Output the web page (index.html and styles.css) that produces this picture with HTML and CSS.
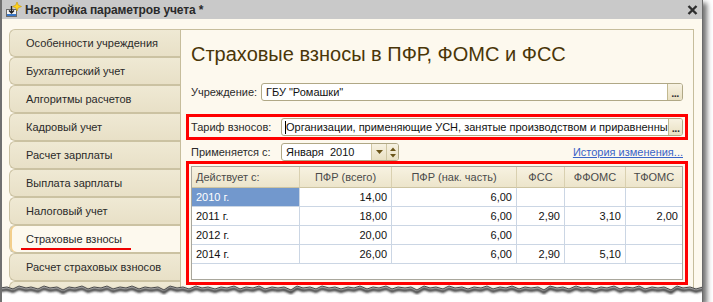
FILE: index.html
```html
<!DOCTYPE html>
<html lang="ru">
<head>
<meta charset="utf-8">
<title>Настройка параметров учета</title>
<link rel="stylesheet" href="styles.css">
</head>
<body>
<div class="window">
  <div class="titlebar">
    <svg class="app-icon" width="18" height="17" viewBox="0 0 18 17">
      <rect x="2.5" y="8.5" width="10" height="7" fill="#f4f4f4" stroke="#6a6a6a"/>
      <rect x="3" y="13" width="9" height="2" fill="#3a78c9"/>
      <path d="M7.5 5 V12 M5 9.5 L7.5 12 L10 9.5" fill="none" stroke="#222" stroke-width="1.4"/>
      <path d="M13 1 L14.3 4.2 L17.5 5.5 L14.3 6.8 L13 10 L11.7 6.8 L8.5 5.5 L11.7 4.2 Z" fill="#ffd21a" stroke="#c99a00" stroke-width="0.6"/>
    </svg>
    <span class="title">Настройка параметров учета *</span>
    <svg class="close" width="11" height="10" viewBox="0 0 11 10">
      <path d="M1.5 1 L9.5 9 M9.5 1 L1.5 9" stroke="#2e2e2e" stroke-width="2.4"/>
    </svg>
  </div>
  <div class="frame">
    <nav class="tabs">
      <div class="tab">Особенности учреждения</div>
      <div class="tab">Бухгалтерский учет</div>
      <div class="tab">Алгоритмы расчетов</div>
      <div class="tab">Кадровый учет</div>
      <div class="tab">Расчет зарплаты</div>
      <div class="tab">Выплата зарплаты</div>
      <div class="tab">Налоговый учет</div>
      <div class="tab active"><span class="mark">Страховые взносы</span></div>
      <div class="tab">Расчет страховых взносов</div>
      <div class="tab"></div>
    </nav>
    <section class="panel">
      <h1 class="heading">Страховые взносы в ПФР, ФОМС и ФСС</h1>
      <div class="row r-org">
        <span class="label l-short">Учреждение:</span>
        <div class="field grow"><span class="val">ГБУ "Ромашки"</span><span class="dots">...</span></div>
      </div>
      <div class="row boxed r-tariff">
        <span class="label l-long">Тариф взносов:</span>
        <div class="field grow"><span class="caret"></span><span class="val">Организации, применяющие УСН, занятые производством и приравненны</span><span class="dots">...</span></div>
      </div>
      <div class="row r-date">
        <span class="label l-long">Применяется с:</span>
        <div class="field date">
          <span class="val">Января&nbsp; 2010</span>
          <span class="btn drop"><svg width="7" height="4" viewBox="0 0 7 4"><path d="M0 0 H7 L3.5 4 Z" fill="#6b561a"/></svg></span>
          <span class="btn spin"><svg width="6" height="11" viewBox="0 0 6 11"><path d="M0 4 L3 0.5 L6 4 Z M0 7 H6 L3 10.5 Z" fill="#6b561a"/></svg></span>
        </div>
        <a class="link" href="#">История изменения...</a>
      </div>
      <div class="boxed tablebox">
        <div class="grid">
          <div class="grow-row head">
            <div class="c left">Действует с:</div>
            <div class="c">ПФР (всего)</div>
            <div class="c">ПФР (нак. часть)</div>
            <div class="c">ФСС</div>
            <div class="c">ФФОМС</div>
            <div class="c last">ТФОМС</div>
          </div>
          <div class="grow-row">
            <div class="c left sel">2010 г.</div>
            <div class="c num">14,00</div>
            <div class="c num">6,00</div>
            <div class="c num"></div>
            <div class="c num"></div>
            <div class="c num last"></div>
          </div>
          <div class="grow-row">
            <div class="c left">2011 г.</div>
            <div class="c num">18,00</div>
            <div class="c num">6,00</div>
            <div class="c num">2,90</div>
            <div class="c num">3,10</div>
            <div class="c num last">2,00</div>
          </div>
          <div class="grow-row">
            <div class="c left">2012 г.</div>
            <div class="c num">20,00</div>
            <div class="c num">6,00</div>
            <div class="c num"></div>
            <div class="c num"></div>
            <div class="c num last"></div>
          </div>
          <div class="grow-row">
            <div class="c left">2014 г.</div>
            <div class="c num">26,00</div>
            <div class="c num">6,00</div>
            <div class="c num">2,90</div>
            <div class="c num">5,10</div>
            <div class="c num last"></div>
          </div>
        </div>
      </div>
    </section>
  </div>
  <svg class="tear" width="713" height="18" viewBox="0 0 713 18">
    <defs>
      <filter id="blur" x="-5%" y="-50%" width="110%" height="200%"><feGaussianBlur stdDeviation="1.3"/></filter>
    </defs>
    <polygon fill="#ffffff" points="0,4 7,3 13,5 19,2 26,4 31,3 38,5 44,2 50,4 57,3 63,6 69,3 75,4 82,2 88,5 94,3 101,4 107,2 113,5 120,3 126,4 132,2 139,5 145,3 151,4 158,3 164,6 170,2 177,4 183,3 189,5 196,2 202,4 208,3 215,5 221,3 227,4 234,2 240,5 246,3 253,4 259,2 265,5 272,3 278,4 284,3 291,6 297,2 303,4 310,3 316,5 322,2 329,4 335,3 341,5 348,3 354,4 360,2 367,5 373,3 379,4 386,2 392,5 398,3 405,4 411,3 417,6 424,2 430,4 436,3 443,5 449,2 455,4 462,3 468,5 474,3 481,4 487,2 493,5 500,3 506,4 512,2 519,5 525,3 531,4 538,3 544,6 550,2 557,4 563,3 569,5 576,2 582,4 588,3 595,5 601,3 607,4 614,2 620,5 626,3 633,4 639,2 645,5 652,3 658,4 664,3 671,6 677,2 683,4 690,3 696,5 703,3 713,4 713,18 0,18"/>
    <polyline filter="url(#blur)" transform="translate(0,2.5)" fill="none" stroke="#3a3a3a" stroke-width="3" points="0,4 7,3 13,5 19,2 26,4 31,3 38,5 44,2 50,4 57,3 63,6 69,3 75,4 82,2 88,5 94,3 101,4 107,2 113,5 120,3 126,4 132,2 139,5 145,3 151,4 158,3 164,6 170,2 177,4 183,3 189,5 196,2 202,4 208,3 215,5 221,3 227,4 234,2 240,5 246,3 253,4 259,2 265,5 272,3 278,4 284,3 291,6 297,2 303,4 310,3 316,5 322,2 329,4 335,3 341,5 348,3 354,4 360,2 367,5 373,3 379,4 386,2 392,5 398,3 405,4 411,3 417,6 424,2 430,4 436,3 443,5 449,2 455,4 462,3 468,5 474,3 481,4 487,2 493,5 500,3 506,4 512,2 519,5 525,3 531,4 538,3 544,6 550,2 557,4 563,3 569,5 576,2 582,4 588,3 595,5 601,3 607,4 614,2 620,5 626,3 633,4 639,2 645,5 652,3 658,4 664,3 671,6 677,2 683,4 690,3 696,5 703,3 713,4"/>
    <polyline fill="none" stroke="#4a4a4a" stroke-width="1" points="0,4 7,3 13,5 19,2 26,4 31,3 38,5 44,2 50,4 57,3 63,6 69,3 75,4 82,2 88,5 94,3 101,4 107,2 113,5 120,3 126,4 132,2 139,5 145,3 151,4 158,3 164,6 170,2 177,4 183,3 189,5 196,2 202,4 208,3 215,5 221,3 227,4 234,2 240,5 246,3 253,4 259,2 265,5 272,3 278,4 284,3 291,6 297,2 303,4 310,3 316,5 322,2 329,4 335,3 341,5 348,3 354,4 360,2 367,5 373,3 379,4 386,2 392,5 398,3 405,4 411,3 417,6 424,2 430,4 436,3 443,5 449,2 455,4 462,3 468,5 474,3 481,4 487,2 493,5 500,3 506,4 512,2 519,5 525,3 531,4 538,3 544,6 550,2 557,4 563,3 569,5 576,2 582,4 588,3 595,5 601,3 607,4 614,2 620,5 626,3 633,4 639,2 645,5 652,3 658,4 664,3 671,6 677,2 683,4 690,3 696,5 703,3 713,4"/>
  </svg>
</div>
</body>
</html>
```

FILE: styles.css
```css
* { box-sizing: border-box; }

html, body {
  margin: 0;
  padding: 0;
}

body {
  width: 713px;
  height: 302px;
  overflow: hidden;
  background: #ffffff;
  font-family: "Liberation Sans", Arial, sans-serif;
  font-size: 11px;
  color: #1e1e1e;
}

.window {
  position: relative;
  width: 703px;
  height: 302px;
  overflow: hidden;
  background: #fdf9ee;
  border-left: 2px solid #707070;
  border-right: 1px solid #6a6a6a;
  box-shadow: 4px 3px 5px rgba(0, 0, 0, 0.55);
}

/* Title bar */
.titlebar {
  height: 19px;
  background: #c9c9c9;
  display: flex;
  align-items: center;
  padding-left: 2px;
}

.app-icon {
  flex: none;
  margin-top: -1px;
}

.title {
  margin-left: 3px;
  font-size: 12px;
  font-weight: bold;
  color: #2a2a2a;
  letter-spacing: -0.1px;
}

.close {
  margin-left: auto;
  margin-right: 4px;
}

/* Main frame */
.frame {
  display: flex;
  padding-top: 10px;
}

.tabs {
  width: 171px;
  height: 273px;
  overflow: hidden;
  margin-left: 7px;
  display: flex;
  flex-direction: column;
  flex: none;
}

.tab {
  height: 28px;
  flex: none;
  border: 1px solid #cbc2a2;
  border-right: none;
  border-radius: 6px 0 0 6px;
  background: linear-gradient(#efe9d4, #e8e0c7);
  padding-left: 16px;
  display: flex;
  align-items: center;
  color: #2a2a2a;
  white-space: nowrap;
}

.tab.active {
  margin-right: -1px;
  position: relative;
  z-index: 1;
  background: #fdf9ee;
  box-shadow: inset 2px 0 0 #f3cf8c;
}

.mark {
  padding: 0 9px 3px 5px;
  margin-left: -5px;
  border-bottom: 2px solid #ee0000;
  margin-top: 4px;
}

.panel {
  width: 514px;
  height: 273px;
  border: 1px solid #c6bd9b;
  border-bottom: none;
  background: #fdf9ee;
  padding: 0 5px;
  flex: none;
}

.heading {
  margin: 12px 0 0 5px;
  font-size: 20px;
  line-height: 24px;
  font-weight: normal;
  color: #4a3608;
  white-space: nowrap;
}

.row {
  display: flex;
  align-items: center;
  height: 18px;
  padding: 0 5px;
}

.r-org { margin-top: 17px; }

.boxed {
  border: 3px solid #ff0000;
}

.row.boxed {
  height: 26px;
  padding: 1px 2px;
  margin-top: 13px;
}

.r-date { margin-top: 3px; }

.label {
  flex: none;
  color: #2a2a2a;
  white-space: nowrap;
}

.l-short { width: 70px; }
.l-long { width: 90px; }

.field {
  height: 18px;
  border: 1px solid #b0a886;
  border-radius: 3px;
  background: #ffffff;
  display: flex;
  align-items: stretch;
  overflow: hidden;
}

.grow { flex: 1; }

.val {
  flex: 1;
  padding-left: 4px;
  line-height: 16px;
  white-space: nowrap;
  color: #111;
}

.caret {
  width: 1px;
  background: #000;
  margin: 2px 0 1px 3px;
  flex: none;
}

.r-tariff .val { padding-left: 0; }

.dots {
  flex: none;
  width: 15px;
  border-left: 1px solid #c2b990;
  background: linear-gradient(#f7f2e2, #e9e0c2);
  font-weight: bold;
  font-size: 11px;
  line-height: 19px;
  text-align: center;
  color: #333;
  letter-spacing: -0.5px;
}

.date {
  width: 118px;
  flex: none;
}

.btn {
  flex: none;
  display: flex;
  align-items: center;
  justify-content: center;
  background: linear-gradient(#f7f2e2, #e9e0c2);
  border-left: 1px solid #cfc6a3;
}

.drop { width: 15px; }
.spin { width: 12px; }

.link {
  margin-left: auto;
  color: #3a63c8;
  text-decoration: underline;
  white-space: nowrap;
}

/* Table */
.tablebox {
  margin-top: 0;
  padding: 2px;
}

.grid {
  height: 114px;
  border: 1px solid #a9a79c;
  background: #ffffff;
}

.grow-row {
  display: grid;
  grid-template-columns: 108px 92px 125px 48px 61px 56px;
  height: 19px;
}

.grow-row.head {
  height: 21px;
  background: linear-gradient(#f7f2e1, #ece4ca);
}

.c {
  border-right: 1px solid #cbd6e4;
  border-bottom: 1px solid #cbd6e4;
  padding: 0 4px;
  line-height: 18px;
  white-space: nowrap;
  overflow: hidden;
  color: #111;
}

.c.last { border-right: none; }

.head .c {
  border-right-color: #d9d0b0;
  border-bottom-color: #cdc4a2;
  line-height: 20px;
  text-align: center;
  color: #4a4a4a;
}

.head .c.left { text-align: left; }

.num { text-align: right; }

.sel {
  background: #7298cd;
  color: #ffffff;
}

.tear {
  position: absolute;
  left: -2px;
  top: 284px;
}
```
